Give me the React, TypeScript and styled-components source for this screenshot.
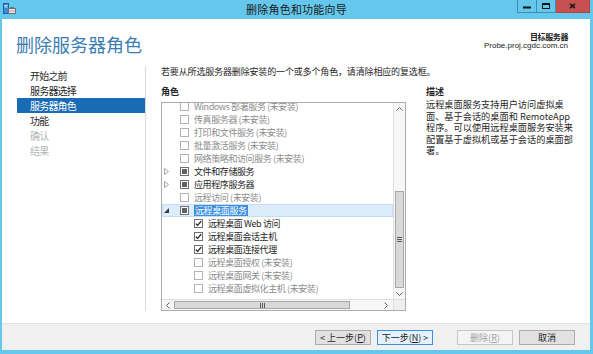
import React from "react";
import styled, { createGlobalStyle } from "styled-components";

const FONT = `"Noto Sans CJK SC", "Noto Sans", sans-serif`;

const Global = createGlobalStyle`
  html, body { margin: 0; padding: 0; }
  body { width: 593px; height: 354px; overflow: hidden; background: #65c7ec; font-family: ${FONT}; }
  * { box-sizing: border-box; }
`;

const Window = styled.div`
  width: 593px;
  height: 354px;
  background: #65c7ec;
  display: flex;
  flex-direction: column;
  font-family: ${FONT};
  color: #1e1e1e;
`;

const TitleBar = styled.div`
  height: 19px;
  flex: none;
  display: grid;
  grid-template-columns: 1fr auto 1fr;
  align-items: start;
`;

const TitleIcon = styled.div`
  padding: 3px 0 0 3px;
  display: flex;
`;

const TitleText = styled.div`
  font-size: 11px;
  line-height: 19px;
  color: #1b1b1b;
  letter-spacing: 0.2px;
`;

const CaptionButtons = styled.div`
  display: flex;
  justify-content: flex-end;
  padding-right: 3px;
`;

const CaptionButton = styled.div<{ $close?: boolean; $w: number }>`
  width: ${(p) => p.$w}px;
  height: 13px;
  display: flex;
  align-items: center;
  justify-content: center;
  background: ${(p) => (p.$close ? "#c75050" : "#65c7ec")};
  border: 1px solid ${(p) => (p.$close ? "#b04545" : "#3d8db0")};
  border-top: none;
  & + & {
    border-left: none;
  }
`;

const Frame = styled.div`
  flex: 1;
  margin: 0 3px 4px 2px;
  background: #fff;
  display: flex;
  flex-direction: column;
  min-height: 0;
`;

const Header = styled.div`
  height: 47px;
  flex: none;
  display: flex;
  justify-content: space-between;
  align-items: flex-start;
  padding: 14px 22px 0 14px;
`;

const PageTitle = styled.h1`
  margin: 0;
  font-size: 18px;
  line-height: 22px;
  font-weight: 400;
  color: #3c7db0;
`;

const Target = styled.div`
  text-align: right;
  margin-top: -1px;
`;

const TargetLabel = styled.div`
  font-size: 8px;
  line-height: 9px;
  font-weight: 700;
  letter-spacing: -0.4px;
  color: #222;
`;

const TargetName = styled.div`
  font-family: "Liberation Sans", Arial, sans-serif;
  font-size: 8px;
  line-height: 9px;
  color: #222;
`;

const Main = styled.div`
  flex: 1;
  display: flex;
  min-height: 0;
`;

const Nav = styled.nav`
  width: 144px;
  flex: none;
  border-right: 1px solid #dadada;
  padding: 2px 0 0 15px;
`;

const NavItem = styled.div<{ $active?: boolean; $disabled?: boolean }>`
  height: 15px;
  line-height: 15px;
  padding-left: 13px;
  font-size: 10px;
  letter-spacing: -0.8px;
  color: ${(p) => (p.$active ? "#fff" : p.$disabled ? "#b4b4b4" : "#262626")};
  background: ${(p) => (p.$active ? "#1a6bb5" : "transparent")};
`;

const Content = styled.div`
  flex: 1;
  padding-left: 15px;
  display: flex;
  flex-direction: column;
  min-width: 0;
`;

const Instruction = styled.div`
  font-size: 9px;
  line-height: 12px;
  height: 12px;
  letter-spacing: -0.15px;
  white-space: nowrap;
  color: #262626;
`;

const Columns = styled.div`
  display: flex;
  margin-top: 8px;
  gap: 20px;
  flex: 1;
  min-height: 0;
`;

const TreeColumn = styled.div`
  width: 245px;
  flex: none;
  display: flex;
  flex-direction: column;
`;

const SectionLabel = styled.div`
  font-size: 9px;
  line-height: 12px;
  height: 12px;
  font-weight: 700;
  color: #262626;
`;

const TreeBox = styled.div`
  margin-top: 4px;
  height: 209px;
  border: 1px solid #abadb3;
  display: grid;
  grid-template-columns: 1fr 12px;
  grid-template-rows: 1fr 11px;
`;

const RowsViewport = styled.div`
  overflow: hidden;
  min-height: 0;
`;

const RowList = styled.div`
  margin-top: -3px;
`;

const Row = styled.div<{ $level: number; $selected?: boolean }>`
  height: 13px;
  display: flex;
  align-items: center;
  padding-left: ${(p) => p.$level * 14}px;
  background: ${(p) => (p.$selected ? "#dcecfb" : "transparent")};
  box-shadow: ${(p) => (p.$selected ? "inset 0 0 0 1px #c3def6" : "none")};
`;

const Expander = styled.span`
  width: 18px;
  flex: none;
  display: flex;
  align-items: center;
  padding-left: 2px;
`;

const Box = styled.span<{ $state: "off" | "on" | "partial" }>`
  width: 9px;
  height: 9px;
  flex: none;
  border: 1px solid ${(p) => (p.$state === "off" ? "#b3b3b3" : "#707070")};
  background: #fff;
  display: flex;
  align-items: center;
  justify-content: center;
`;

const PartialMark = styled.span`
  width: 5px;
  height: 5px;
  background: #626262;
`;

const RowLabel = styled.span<{ $muted?: boolean; $selected?: boolean }>`
  margin-left: 5px;
  font-size: 9px;
  letter-spacing: -0.4px;
  line-height: 11px;
  height: 11px;
  white-space: nowrap;
  padding: 0 ${(p) => (p.$selected ? "1px" : "0")};
  color: ${(p) => (p.$selected ? "#fff" : p.$muted ? "#8c8c8c" : "#1e1e1e")};
  background: ${(p) => (p.$selected ? "#3c8fdc" : "transparent")};
`;

const VScroll = styled.div`
  background: #f7f7f7;
  border-left: 1px solid #dedede;
  display: flex;
  flex-direction: column;
  min-height: 0;
`;

const HScroll = styled.div`
  background: #f7f7f7;
  border-top: 1px solid #dedede;
  display: flex;
`;

const Corner = styled.div`
  background: #efefef;
  border-top: 1px solid #dedede;
  border-left: 1px solid #dedede;
`;

const ArrowCell = styled.div<{ $size: number; $horizontal?: boolean }>`
  flex: none;
  ${(p) => (p.$horizontal ? `width: ${p.$size}px;` : `height: ${p.$size}px;`)}
  display: flex;
  align-items: center;
  justify-content: center;
`;

const Gap = styled.div`
  flex: 1;
`;

const Thumb = styled.div<{ $horizontal?: boolean; $size: number }>`
  flex: none;
  ${(p) =>
    p.$horizontal
      ? `width: ${p.$size}px; margin: 1px 0;`
      : `height: ${p.$size}px; margin: 0 1px;`}
  background: #d9d9d9;
  border: 1px solid #a8a8a8;
  display: flex;
  align-items: center;
  justify-content: center;
`;

const DescColumn = styled.div`
  flex: 1;
  display: flex;
  flex-direction: column;
`;

const DescText = styled.div`
  margin-top: 1px;
  font-size: 9.2px;
  line-height: 11.5px;
  color: #262626;
`;

const DescLine = styled.div`
  white-space: nowrap;
  height: 11.5px;
`;

const Footer = styled.div`
  height: 27px;
  flex: none;
  margin-top: 12px;
  background: #f0f0f0;
  border-top: 1px solid #e2e2e2;
  display: flex;
  justify-content: flex-end;
  align-items: flex-start;
  gap: 24px;
  padding: 6px 15px 0 0;
`;

const ButtonGroup = styled.div`
  display: flex;
  gap: 6px;
`;

const Button = styled.button<{ $primary?: boolean }>`
  width: 56px;
  height: 15px;
  padding: 0;
  font-family: ${FONT};
  font-size: 9px;
  line-height: 12px;
  display: flex;
  align-items: center;
  justify-content: center;
  white-space: nowrap;
  color: #1e1e1e;
  background: ${(p) => (p.$primary ? "#e5f1fb" : "#e1e1e1")};
  border: 1px solid ${(p) => (p.$primary ? "#3c8fdc" : "#adadad")};
  &:disabled {
    color: #a3a3a3;
    background: #f4f4f4;
    border-color: #c6c6c6;
  }
`;

const Key = styled.span`
  text-decoration: underline;
`;

type CheckState = "off" | "on" | "partial";
type Node = {
  level: number;
  label: string;
  state: CheckState;
  muted?: boolean;
  expander?: "open" | "closed";
  selected?: boolean;
};

const rows: Node[] = [
  { level: 0, label: "Windows 部署服务 (未安装)", state: "off", muted: true },
  { level: 0, label: "传真服务器 (未安装)", state: "off", muted: true },
  { level: 0, label: "打印和文件服务 (未安装)", state: "off", muted: true },
  { level: 0, label: "批量激活服务 (未安装)", state: "off", muted: true },
  { level: 0, label: "网络策略和访问服务 (未安装)", state: "off", muted: true },
  { level: 0, label: "文件和存储服务", state: "partial", expander: "closed" },
  { level: 0, label: "应用程序服务器", state: "partial", expander: "closed" },
  { level: 0, label: "远程访问 (未安装)", state: "off", muted: true },
  { level: 0, label: "远程桌面服务", state: "partial", expander: "open", selected: true },
  { level: 1, label: "远程桌面 Web 访问", state: "on" },
  { level: 1, label: "远程桌面会话主机", state: "on" },
  { level: 1, label: "远程桌面连接代理", state: "on" },
  { level: 1, label: "远程桌面授权 (未安装)", state: "off", muted: true },
  { level: 1, label: "远程桌面网关 (未安装)", state: "off", muted: true },
  { level: 1, label: "远程桌面虚拟化主机 (未安装)", state: "off", muted: true },
];

const navItems = [
  { label: "开始之前" },
  { label: "服务器选择" },
  { label: "服务器角色", active: true },
  { label: "功能" },
  { label: "确认", disabled: true },
  { label: "结果", disabled: true },
];

const descLines = [
  "远程桌面服务支持用户访问虚拟桌",
  "面、基于会话的桌面和 RemoteApp",
  "程序。可以使用远程桌面服务安装来",
  "配置基于虚拟机或基于会话的桌面部",
  "署。",
];

const Chevron = ({ dir }: { dir: "up" | "down" | "left" | "right" }) => {
  const d = {
    up: "M0.5 3.5 L3.5 0.5 L6.5 3.5",
    down: "M0.5 0.5 L3.5 3.5 L6.5 0.5",
    left: "M3.5 0.5 L0.5 3.5 L3.5 6.5",
    right: "M0.5 0.5 L3.5 3.5 L0.5 6.5",
  }[dir];
  const horiz = dir === "left" || dir === "right";
  return (
    <svg width={horiz ? 4 : 7} height={horiz ? 7 : 4} viewBox={horiz ? "0 0 4 7" : "0 0 7 4"}>
      <path d={d} fill="none" stroke="#606060" strokeWidth="1" />
    </svg>
  );
};

const CheckBox = ({ state }: { state: CheckState }) => (
  <Box $state={state}>
    {state === "partial" && <PartialMark />}
    {state === "on" && (
      <svg width="7" height="7" viewBox="0 0 7 7">
        <path d="M0.8 3.6 L2.6 5.4 L6.2 1.2" fill="none" stroke="#1e1e1e" strokeWidth="1.3" />
      </svg>
    )}
  </Box>
);

const ExpanderIcon = ({ kind }: { kind?: "open" | "closed" }) => (
  <Expander>
    {kind === "closed" && (
      <svg width="5" height="7" viewBox="0 0 5 7">
        <path d="M0.5 0.5 L4.5 3.5 L0.5 6.5 Z" fill="none" stroke="#a3a3a3" strokeWidth="1" />
      </svg>
    )}
    {kind === "open" && (
      <svg width="5" height="5" viewBox="0 0 5 5">
        <path d="M5 0 L5 5 L0 5 Z" fill="#3a3a3a" />
      </svg>
    )}
  </Expander>
);

export default function App() {
  return (
    <>
      <Global />
      <Window>
        <TitleBar>
          <TitleIcon>
            <svg width="13" height="11" viewBox="0 0 13 11">
              <rect x="0.5" y="0.5" width="5" height="10" fill="#3b8ad6" stroke="#1d5fa3" />
              <path d="M1.5 2.5H4.5M1.5 4H4.5" stroke="#fff" strokeWidth="0.8" />
              <rect x="5.5" y="5.5" width="7" height="5" fill="#e6e6e6" stroke="#6f6f6f" />
              <path d="M7.5 5.5V4.5H10.5V5.5" fill="none" stroke="#6f6f6f" />
              <path d="M6 8H12" stroke="#9a9a9a" strokeWidth="0.8" />
            </svg>
          </TitleIcon>
          <TitleText>删除角色和功能向导</TitleText>
          <CaptionButtons>
            <CaptionButton $w={20}>
              <svg width="8" height="6" viewBox="0 0 8 6">
                <rect x="0" y="3.5" width="8" height="2" fill="#111" />
              </svg>
            </CaptionButton>
            <CaptionButton $w={19}>
              <svg width="8" height="6" viewBox="0 0 8 6">
                <rect x="0.5" y="0.5" width="7" height="5" fill="none" stroke="#111" />
                <rect x="0" y="0" width="8" height="2" fill="#111" />
              </svg>
            </CaptionButton>
            <CaptionButton $w={34} $close>
              <svg width="7" height="6" viewBox="0 0 7 6">
                <path d="M1 0.8L6 5.2M6 0.8L1 5.2" stroke="#1a1a1a" strokeWidth="1.6" />
              </svg>
            </CaptionButton>
          </CaptionButtons>
        </TitleBar>
        <Frame>
          <Header>
            <PageTitle>删除服务器角色</PageTitle>
            <Target>
              <TargetLabel>目标服务器</TargetLabel>
              <TargetName>Probe.proj.cgdc.com.cn</TargetName>
            </Target>
          </Header>
          <Main>
            <Nav>
              {navItems.map((n) => (
                <NavItem key={n.label} $active={n.active} $disabled={n.disabled}>
                  {n.label}
                </NavItem>
              ))}
            </Nav>
            <Content>
              <Instruction>若要从所选服务器删除安装的一个或多个角色，请清除相应的复选框。</Instruction>
              <Columns>
                <TreeColumn>
                  <SectionLabel>角色</SectionLabel>
                  <TreeBox>
                    <RowsViewport>
                      <RowList>
                        {rows.map((r) => (
                          <Row key={r.label} $level={r.level} $selected={r.selected}>
                            <ExpanderIcon kind={r.expander} />
                            <CheckBox state={r.state} />
                            <RowLabel $muted={r.muted} $selected={r.selected}>
                              {r.label}
                            </RowLabel>
                          </Row>
                        ))}
                      </RowList>
                    </RowsViewport>
                    <VScroll>
                      <ArrowCell $size={12}>
                        <Chevron dir="up" />
                      </ArrowCell>
                      <Gap />
                      <Thumb $size={97}>
                        <svg width="5" height="5" viewBox="0 0 5 5">
                          <path d="M0 0.5H5M0 2.5H5M0 4.5H5" stroke="#5a5a5a" strokeWidth="1" />
                        </svg>
                      </Thumb>
                      <ArrowCell $size={11}>
                        <Chevron dir="down" />
                      </ArrowCell>
                    </VScroll>
                    <HScroll>
                      <ArrowCell $size={12} $horizontal>
                        <Chevron dir="left" />
                      </ArrowCell>
                      <Thumb $size={176} $horizontal>
                        <svg width="5" height="5" viewBox="0 0 5 5">
                          <path d="M0.5 0V5M2.5 0V5M4.5 0V5" stroke="#5a5a5a" strokeWidth="1" />
                        </svg>
                      </Thumb>
                      <Gap />
                      <ArrowCell $size={14} $horizontal>
                        <Chevron dir="right" />
                      </ArrowCell>
                    </HScroll>
                    <Corner />
                  </TreeBox>
                </TreeColumn>
                <DescColumn>
                  <SectionLabel>描述</SectionLabel>
                  <DescText>
                    {descLines.map((l) => (
                      <DescLine key={l}>{l}</DescLine>
                    ))}
                  </DescText>
                </DescColumn>
              </Columns>
            </Content>
          </Main>
          <Footer>
            <ButtonGroup>
              <Button>
                &lt; 上一步(<Key>P</Key>)
              </Button>
              <Button $primary>
                下一步(<Key>N</Key>) &gt;
              </Button>
            </ButtonGroup>
            <ButtonGroup>
              <Button disabled>
                删除(<Key>R</Key>)
              </Button>
              <Button>取消</Button>
            </ButtonGroup>
          </Footer>
        </Frame>
      </Window>
    </>
  );
}
